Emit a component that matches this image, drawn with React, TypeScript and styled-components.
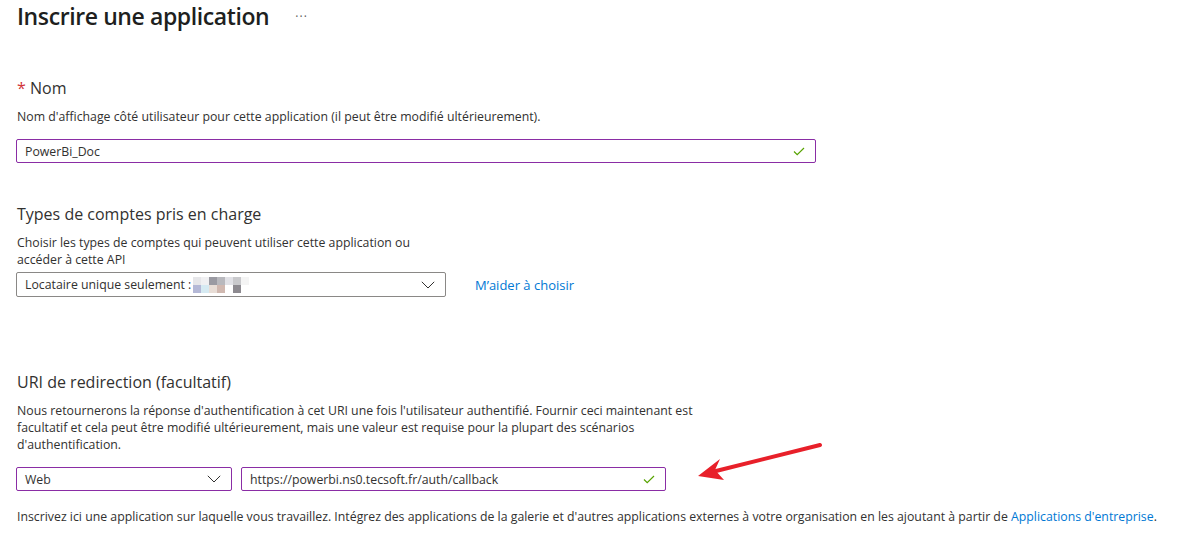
import React from 'react'
import styled, { createGlobalStyle } from 'styled-components'

const GlobalStyle = createGlobalStyle`
  html, body {
    margin: 0;
    padding: 0;
    background: #ffffff;
  }
  body {
    font-family: 'Open Sans', 'Noto Sans', sans-serif;
    color: #323130;
  }
`

const Check: React.FC = () => (
  <svg width="12" height="9" viewBox="0 0 12 9">
    <path d="M1 4.5 L4.2 7.6 L11 1" fill="none" stroke="#57a300" strokeWidth="1.2" />
  </svg>
)

const Chevron: React.FC = () => (
  <svg width="14" height="8" viewBox="0 0 14 8">
    <path d="M0.8 0.8 L7 7 L13.2 0.8" fill="none" stroke="#323130" strokeWidth="1" />
  </svg>
)

// blurred tenant name in the screenshot
const mosaic = [
  ['#e6e6e9', '#f0f0f2', '#9a9aa2', '#b8b8bd', '#e1e1e6', '#c9c9cc', '#f4f4f4'],
  ['#b4b8d6', '#d6eaf2', '#e8ddd6', '#d0b8b0', '#ffffff', '#8d8a90', '#ffffff'],
]

const Mosaic: React.FC = () => (
  <svg width="56" height="16" viewBox="0 0 56 16">
    {mosaic.map((row, r) =>
      row.map((c, i) => <rect key={`${r}-${i}`} x={i * 8} y={r * 8} width="8" height="8" fill={c} />)
    )}
  </svg>
)

const Arrow: React.FC = () => (
  <ArrowBox width="140" height="44" viewBox="0 0 140 44">
    <path d="M126 6 L22 32" stroke="#e8202a" strokeWidth="4" strokeLinecap="round" fill="none" />
    <path d="M4 37 L26 20 L21 31 L30 41 Z" fill="#e8202a" />
  </ArrowBox>
)

export default function App() {
  return (
    <>
      <GlobalStyle />
      <Page>
        <TitleRow>
          <Title>Inscrire une application</Title>
          <More>···</More>
        </TitleRow>

        <Section $top={45}>
          <Label>
            <Required>*</Required> Nom
          </Label>
          <Help $after={14}>
            Nom d'affichage côté utilisateur pour cette application (il peut être modifié ultérieurement).
          </Help>
          <Field $width={800} $valid>
            <FieldText>PowerBi_Doc</FieldText>
            <Check />
          </Field>
        </Section>

        <Section $top={40}>
          <Label>Types de comptes pris en charge</Label>
          <Help $after={4} $width={410}>
            Choisir les types de comptes qui peuvent utiliser cette application ou accéder à cette API
          </Help>
          <Row $gap={29}>
            <Field $width={430} $height={25}>
              <FieldText>
                Locataire unique seulement : <Mosaic />
              </FieldText>
              <Chevron />
            </Field>
            <Link $size={13}>M’aider à choisir</Link>
          </Row>
        </Section>

        <Section $top={74}>
          <Label>URI de redirection (facultatif)</Label>
          <Help $after={14} $width={690}>
            Nous retournerons la réponse d'authentification à cet URI une fois l'utilisateur authentifié. Fournir ceci
            maintenant est facultatif et cela peut être modifié ultérieurement, mais une valeur est requise pour la
            plupart des scénarios d'authentification.
          </Help>
          <Row $gap={9}>
            <Field $width={216} $valid>
              <FieldText>Web</FieldText>
              <Chevron />
            </Field>
            <Field $width={425} $valid>
              <FieldText>https://powerbi.ns0.tecsoft.fr/auth/callback</FieldText>
              <Check />
            </Field>
          </Row>
          <Arrow />
        </Section>

        <Footer>
          Inscrivez ici une application sur laquelle vous travaillez. Intégrez des applications de la galerie et
          d'autres applications externes à votre organisation en les ajoutant à partir de{' '}
          <Link>Applications d'entreprise</Link>.
        </Footer>
      </Page>
    </>
  )
}

const Page = styled.div`
  width: 1199px;
  height: 553px;
  box-sizing: border-box;
  padding: 0 0 0 16px;
  overflow: hidden;
`

const TitleRow = styled.div`
  display: flex;
  align-items: center;
  height: 32px;
`

const Title = styled.h1`
  margin: 0 0 0 1px;
  font-size: 23px;
  font-weight: 600;
  line-height: 32px;
  letter-spacing: -0.4px;
  color: #201f1e;
`

const More = styled.span`
  margin-left: 26px;
  font-size: 12px;
  color: #605e5c;
  letter-spacing: 1px;
`

const Section = styled.section<{ $top: number }>`
  position: relative;
  margin-top: ${({ $top }) => $top}px;
`

const Label = styled.div`
  padding-left: 1px;
  font-size: 16px;
  line-height: 22px;
  color: #323130;
`

const Required = styled.span`
  color: #d13438;
`

const Help = styled.div<{ $after: number; $width?: number }>`
  margin: 9px 0 ${({ $after }) => $after}px 1px;
  max-width: ${({ $width }) => ($width ? `${$width}px` : 'none')};
  font-size: 12.3px;
  line-height: 17px;
  color: #323130;
`

const Row = styled.div<{ $gap: number }>`
  display: flex;
  align-items: center;
  gap: ${({ $gap }) => $gap}px;
`

const Field = styled.div<{ $width: number; $height?: number; $valid?: boolean }>`
  display: flex;
  align-items: center;
  justify-content: space-between;
  box-sizing: border-box;
  width: ${({ $width }) => $width}px;
  height: ${({ $height }) => $height ?? 24}px;
  padding: 0 10px 0 8px;
  border: 1px solid ${({ $valid }) => ($valid ? '#8a2da5' : '#8a8886')};
  border-radius: 2px;
  background: #ffffff;
`

const FieldText = styled.span`
  display: flex;
  align-items: center;
  gap: 2px;
  font-size: 12.3px;
  color: #323130;
  white-space: nowrap;
`

const Link = styled.a<{ $size?: number }>`
  font-size: ${({ $size }) => $size ?? 12.3}px;
  color: #0078d4;
  cursor: pointer;
`

const Footer = styled.p`
  margin: 17px 0 0 1px;
  font-size: 12.3px;
  line-height: 17px;
  color: #323130;
  white-space: nowrap;
`

const ArrowBox = styled.svg`
  position: absolute;
  left: 678px;
  bottom: 8px;
`
